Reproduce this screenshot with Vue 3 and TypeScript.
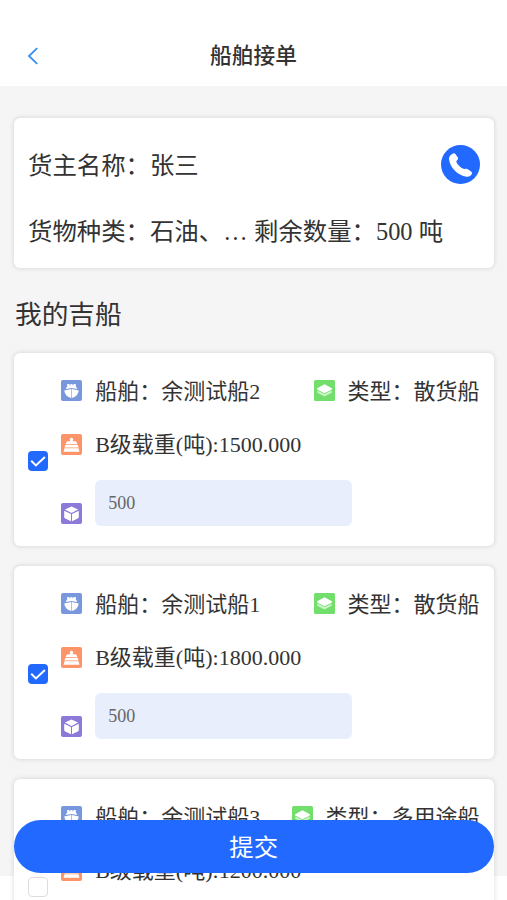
<script setup lang="ts">
import { ref } from 'vue'

interface Ship {
  name: string
  type: string
  load: string
  amount: string
  checked: boolean
}

const ships = ref<Ship[]>([
  { name: '余测试船2', type: '散货船', load: '1500.000', amount: '500', checked: true },
  { name: '余测试船1', type: '散货船', load: '1800.000', amount: '500', checked: true },
  { name: '余测试船3', type: '多用途船', load: '1200.000', amount: '', checked: false },
])
</script>

<template>
  <div class="page">
    <header class="navbar">
      <svg class="back" viewBox="0 0 12 18"><path d="M10.2 1.2 2 9l8.2 7.8" /></svg>
      <h1>船舶接单</h1>
    </header>

    <main class="content">
      <section class="card summary">
        <div class="line owner">
          <span class="text">货主名称：张三</span>
          <svg class="phone" viewBox="0 0 39 39">
            <circle cx="19.5" cy="19.5" r="19.5" fill="#226aff" />
            <path
              fill="#fff"
              d="M11.2 8.9Q13 7.8 14.4 9L16.8 12.4Q17.5 13.9 16.3 15.1L15.2 16.4Q16 18.8 18.2 21.1Q20.6 23.5 23.1 24.1L24.6 23.8Q26 23.5 27.2 24.4L30.4 26.7Q31.6 28 30.6 29.4Q28.8 32 25.7 31.7C16.2 30.4 8.5 21.9 8 13.7Q7.9 10.8 11.2 8.9Z"
            />
          </svg>
        </div>
        <div class="line">
          <span class="text cargo">货物种类：石油、…</span>
          <span class="text">剩余数量：500 吨</span>
        </div>
      </section>

      <h2>我的吉船</h2>

      <section v-for="ship in ships" :key="ship.name" class="card ship">
        <label class="check" :class="{ on: ship.checked }">
          <input v-model="ship.checked" type="checkbox" />
          <svg v-if="ship.checked" viewBox="0 0 20 20"><path d="m3.2 9.8 4.7 4.6 9-8.4" /></svg>
        </label>
        <div class="info">
          <div class="row first">
            <svg class="icon" viewBox="0 0 21 21">
              <rect width="21" height="21" rx="2" fill="#7897dc" />
              <path fill="#fff" d="M6.2 4.1h2.3v1.1h1V4.1h2v1.1h1V4.1h2.3v2.2l1.6 2.8-5.9-1.2-5.9 1.2 1.6-2.8Z" />
              <path fill="#fff" d="m3.2 10.4 7-1.5v9c-4-.9-6.3-3.5-7-7.5Zm14.6 0-7-1.5v9c4-.9 6.3-3.5 7-7.5Z" />
            </svg>
            <span class="text">船舶：{{ ship.name }}</span>
            <span class="kind">
              <svg class="icon" viewBox="0 0 21 21">
                <rect width="21" height="21" rx="1.5" fill="#72de6c" />
                <path fill="#c9f5c6" d="m3.3 10.4 7.2 3.5 7.2-3.5v2.3l-7.2 3.9-7.2-3.9Z" />
                <path fill="#fff" d="m10.5 4.2 7.4 4v1.4l-7.4 3.7-7.4-3.7V8.2Z" />
              </svg>
              <span class="text">类型：{{ ship.type }}</span>
            </span>
          </div>
          <div class="row second">
            <svg class="icon" viewBox="0 0 21 21">
              <rect width="21" height="21" rx="2" fill="#fb9469" />
              <circle cx="10.5" cy="5.4" r="1.7" fill="#fff" />
              <path fill="#fff" d="M9.6 6h1.8v1.3h3.6l1.4 2.8H4.6L6 7.3h3.6ZM4.4 10.7h12.2l1 2.9H3.4Zm-.9 3.5h14l1 3.5h-16Z" />
            </svg>
            <span class="text">B级载重(吨):{{ ship.load }}</span>
          </div>
          <div class="row third">
            <svg class="icon box" viewBox="0 0 21 21">
              <rect width="21" height="21" rx="2" fill="#8c79d8" />
              <path fill="#fff" d="m10.5 3.4 6.6 3.1-6.6 3.4-6.6-3.4ZM3.2 7.7l6.8 3.3v7.2l-5.7-2.7q-1.1-.5-1.1-1.6Zm14.6 0L11 11v7.2l5.7-2.7q1.1-.5 1.1-1.6Z" />
            </svg>
            <input v-model="ship.amount" class="amount" type="text" />
          </div>
        </div>
      </section>
    </main>

    <button class="submit" type="button">提交</button>
  </div>
</template>

<style>
body {
  background: #fff;
}
</style>

<style scoped>
.page {
  position: relative;
  height: 900px;
  overflow: hidden;
  color: #333;
  font-family: "Liberation Serif", "Noto Sans CJK SC", serif;
}

.navbar {
  display: grid;
  grid-template-columns: 60px 1fr 60px;
  align-items: center;
  height: 86px;
  padding-top: 25px;
  box-sizing: border-box;
  background: #fff;
}

.back {
  width: 12px;
  height: 18px;
  margin-left: 27px;
  fill: none;
  stroke: #388ff0;
  stroke-width: 1.8;
}

h1 {
  margin: 0;
  padding-top: 1px;
  font-size: 21.7px;
  font-weight: 500;
  line-height: 32px;
  text-align: center;
}

.content {
  height: 790px;
  padding: 32px 13.5px 0 14px;
  box-sizing: border-box;
  background: #f5f5f5;
}

.card {
  box-sizing: border-box;
  border-radius: 6px;
  background: #fff;
  box-shadow: 0 0 4px 1px rgba(0, 0, 0, 0.1);
}

.summary {
  height: 150.4px;
  padding: 14px;
  font-size: 24.4px;
}

.line {
  display: flex;
  align-items: center;
  height: 66px;
  white-space: pre;
}

.text {
  padding-bottom: 4px;
}

.owner {
  justify-content: space-between;
}

.cargo {
  width: 226px;
}

.phone {
  width: 39px;
  height: 39px;
  margin-bottom: 1px;
}

h2 {
  height: 85px;
  margin: 0;
  padding: 8px 0 0 1px;
  box-sizing: border-box;
  font-size: 26.7px;
  font-weight: 400;
  line-height: 78px;
}

.ship {
  display: flex;
  align-items: center;
  height: 193px;
  margin-bottom: 20px;
  padding: 0 14px 0 14px;
  font-size: 22px;
}

.check {
  flex: none;
  width: 20px;
  height: 20px;
  margin-top: 22px;
  border: 1px solid #ddd;
  border-radius: 4px;
  box-sizing: border-box;
  background: #fff;
}

.check.on {
  border: 0;
  background: #226aff;
}

.check input {
  display: none;
}

.check svg {
  display: block;
  fill: none;
  stroke: #fff;
  stroke-width: 2;
}

.info {
  flex: 1;
  height: 193px;
  margin-left: 13.4px;
}

.row {
  display: flex;
  align-items: center;
  white-space: nowrap;
}

.icon {
  flex: none;
  width: 21px;
  height: 21px;
  margin-right: 12.8px;
}

.first {
  height: 75px;
}

.kind {
  display: flex;
  align-items: center;
  margin-left: auto;
}

.second {
  height: 32px;
}

.third {
  height: 46px;
  margin-top: 20px;
}

.box {
  margin-top: 20px;
}

.amount {
  width: 257px;
  height: 46px;
  padding: 0 13px;
  box-sizing: border-box;
  border: 0;
  border-radius: 6px;
  outline: 0;
  background: #e8eefc;
  color: #666;
  font: 18px "Liberation Serif", serif;
}

.submit {
  position: absolute;
  right: 13.5px;
  bottom: 27px;
  left: 14px;
  height: 53.5px;
  padding: 0 0 1px;
  border: 0;
  border-radius: 27px;
  background: #226aff;
  color: #fff;
  font: 24.4px "Liberation Serif", "Noto Sans CJK SC", serif;
}
</style>
